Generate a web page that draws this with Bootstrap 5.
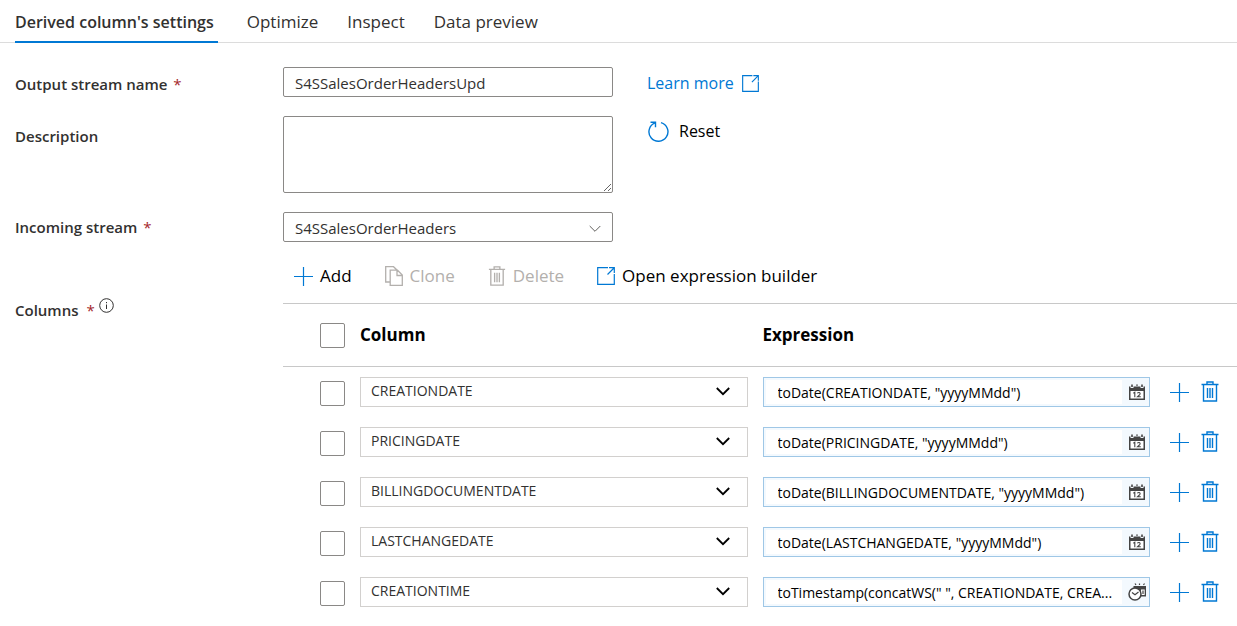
<!DOCTYPE html>
<html lang="en">
<head>
<meta charset="utf-8">
<meta name="viewport" content="width=device-width, initial-scale=1">
<title>Derived column's settings</title>
<link href="https://cdn.jsdelivr.net/npm/bootstrap@5.3.0/dist/css/bootstrap.min.css" rel="stylesheet">
<style>
  :root { --blue: #0078d4; --ink: #323130; --line: #c8c8c8; }
  body { font-family: "Open Sans", "Noto Sans", sans-serif; font-size: 15px; line-height: 20px; color: var(--ink); overflow-x: hidden; }
  svg { display: block; flex: none; fill: none; stroke: currentColor; }
  .settings-tabs { height: 43px; padding-left: 15px; gap: 29px; border-bottom: 1px solid #dcdcdc; }
  .settings-tabs .nav-link { padding: 10px 0 0; height: 43px; font-size: 17px; line-height: 24px; color: var(--ink); border-bottom: 2px solid transparent; white-space: nowrap; }
  .settings-tabs .nav-link.active { padding-right: 4px; font-size: 16px; font-weight: 600; border-color: var(--blue); }
  .settings-form { padding-left: 15px; padding-top: 24px; }
  .field { display: grid; grid-template-columns: 268px minmax(0, 330px) minmax(0, 1fr); margin-bottom: 19px; }
  .field-label { font-weight: 600; padding-top: 7px; }
  .description-label { padding-top: 10px; }
  .incoming-label { padding-top: 5px; }
  .required { color: #a4262c; font-weight: 400; margin-left: 2px; }
  .field-box { height: 30px; padding: 2px 11px 0; font-size: 15px; line-height: 20px; color: var(--ink); border: 1px solid #8a8886; border-radius: 2px; }
  textarea.field-box { height: 77px; display: block; }
  .stream-select { padding-right: 30px; background-image: url("data:image/svg+xml,%3Csvg xmlns='http://www.w3.org/2000/svg' viewBox='0 0 12 8' fill='none' stroke='%23605e5c'%3E%3Cpath d='M.7 1 6 6.300 11.300 1'/%3E%3C/svg%3E"); background-size: 12px 8px; background-position: right 11px top 12px; }
  .aside { padding-left: 34px; }
  .tool { display: inline-flex; align-items: center; gap: 7px; padding: 0; border: 0; background: none; font-size: 17px; line-height: 24px; color: #000; white-space: nowrap; }
  .tool svg, .learn-link { color: var(--blue); }
  .tool:disabled, .tool:disabled svg { color: #b3b0ad; }
  .learn-link { display: inline-flex; align-items: center; gap: 8px; font-size: 16px; line-height: 24px; text-decoration: none; padding-top: 4px; }
  .reset-tool { gap: 9px; font-size: 16px; padding-top: 3px; }
  .columns-field { display: grid; grid-template-columns: 268px minmax(0, 1fr); }
  .columns-label { padding-top: 33px; }
  .columns-label span { padding-top: 6px; }
  .toolbar { height: 42px; padding: 3px 0 0 10px; gap: 33px; }
  .columns-table { width: 100%; table-layout: fixed; border-top: 1px solid var(--line); }
  .columns-table th { height: 63px; padding: 0 15px 0 0; font-size: 17px; font-weight: 700; color: #000; }
  .columns-table thead { border-bottom: 1px solid var(--line); }
  .columns-table td { height: 50px; padding: 0 15px 0 0; vertical-align: middle; }
  .columns-table th:first-child { padding-left: 37px; }
  .columns-table td:first-child { padding: 3px 0 0 37px; }
  .columns-table td:last-child { padding: 0; }
  .check-col { width: 77px; }
  .action-col { width: 72px; }
  .columns-table .form-check-input { display: block; width: 25px; height: 25px; margin: 0; border: 1px solid #8a8886; border-radius: 2px; }
  .column-select { height: 30px; padding: 0 40px 2px 10px; font-size: 14px; line-height: 20px; color: var(--ink); border: 1px solid #d2d0ce; border-radius: 0; background-image: url("data:image/svg+xml,%3Csvg xmlns='http://www.w3.org/2000/svg' viewBox='0 0 14 9' fill='none' stroke='%23000' stroke-width='1.800'%3E%3Cpath d='M.8 1 7 7.200 13.200 1'/%3E%3C/svg%3E"); background-size: 14px 9px; background-position: right 17px center; }
  .expression { display: flex; align-items: center; height: 30px; padding: 0 3px 0 2px; border: 1px solid #9fc7e6; background: #f3f9fe; }
  .expression input { flex: 1; min-width: 0; height: 24px; padding: 2px 0 0 12px; border: 0; background: #fff; font-size: 14px; line-height: 20px; color: #000; text-overflow: ellipsis; }
  .expression svg { margin-left: 6px; color: #444; }
  .icon-btn { padding: 0; border: 0; background: none; color: var(--blue); }
</style>
</head>
<body>
<svg width="0" height="0" class="position-absolute" aria-hidden="true">
  <symbol id="plus" viewBox="0 0 20 20"><path d="M10.500 1v19M1 10.500h19" stroke-width="1.200"/></symbol>
  <symbol id="trash" viewBox="0 0 18 21"><path d="M.5 3.500h17M6 3.500V1h6v2.500M2.500 3.500v16.500h13V3.500M6.500 7v10M9 7v10M11.500 7v10" stroke-width="1.400"/></symbol>
  <symbol id="open" viewBox="0 0 18 18"><path d="M11 .7H.7v16.600h16.600V7M10.500 7.500 17 1M12 .7h5.300V6" stroke-width="1.200"/></symbol>
  <symbol id="copy" viewBox="0 0 18 20"><path d="M5 16H.7V.7h7.800L12 4M5.200 4.200h7.300l4.800 4.800v10.300H5.200zM12 4.500V9.500h5" stroke-width="1.300"/></symbol>
  <symbol id="reset" viewBox="0 0 21 21"><path d="M13 1.600A9.500 9.500 0 1 1 7 1.900M2.500 1.200h5v5" stroke-width="1.400"/></symbol>
  <symbol id="date" viewBox="0 0 18 18"><path d="M1 3.500h1.500v1.500h3V3.500h7v1.500h3V3.500H17V17H1z" fill="currentColor" stroke="none"/><path d="M2.500 8h13v7.500h-13z" fill="#fff" stroke="none"/><path d="M4 1.500v2.500M9 1.500v1.200M14 1.500v2.500" stroke-width="1.600"/><path d="M5.300 10.200 6.800 9.300V14.300M9.300 10.300Q10 9.300 11.200 9.500 12.700 10 11.700 11.600L9.500 13.800H12.800" stroke-width="1.100"/></symbol>
  <symbol id="time" viewBox="0 0 18 18"><path d="M5.500 3H18v10.500H5.500z" fill="currentColor" stroke="none"/><path d="M13 6.500h3.700v5.500H13z" fill="#fff" stroke="none"/><path d="M15 7.500v3.500M7 .5 8 2M11.500 .5v1.500M16.500 .5l-1 1.500" stroke-width="1.200"/><circle cx="7" cy="11" r="6" fill="#fff" stroke-width="1.500"/><path d="m4 9.500 3 2.300L10.500 9" stroke-width="1.200"/></symbol>
</svg>

<nav class="nav settings-tabs flex-nowrap">
  <a class="nav-link active" aria-current="page" href="#">Derived column's settings</a>
  <a class="nav-link" href="#">Optimize</a>
  <a class="nav-link" href="#">Inspect</a>
  <a class="nav-link" href="#">Data preview</a>
</nav>

<form class="settings-form">
  <div class="field">
    <label class="field-label" for="output">Output stream name <span class="required">*</span></label>
    <input id="output" class="form-control field-box" type="text" value="S4SSalesOrderHeadersUpd">
    <div class="aside"><a class="learn-link" href="#">Learn more <svg width="17" height="17"><use href="#open"/></svg></a></div>
  </div>
  <div class="field">
    <label class="field-label description-label" for="description">Description</label>
    <textarea id="description" class="form-control field-box"></textarea>
    <div class="aside"><button type="button" class="tool reset-tool"><svg width="23" height="21"><use href="#reset"/></svg>Reset</button></div>
  </div>
  <div class="field">
    <label class="field-label incoming-label" for="incoming">Incoming stream <span class="required">*</span></label>
    <select id="incoming" class="form-select field-box stream-select"><option>S4SSalesOrderHeaders</option></select>
  </div>

  <div class="columns-field">
    <div class="field-label columns-label d-flex align-items-start"><span>Columns</span><span class="required ms-2">*</span>
      <svg class="ms-1 mt-1" width="15" height="15" viewBox="0 0 15 15"><circle cx="7.500" cy="7.500" r="6.800"/><path d="M7.500 6.500v4.500M7.500 4v1.200"/></svg>
    </div>
    <div>
      <div class="toolbar d-flex align-items-start">
        <button type="button" class="tool"><svg width="20" height="20"><use href="#plus"/></svg>Add</button>
        <button type="button" class="tool" disabled><svg width="18" height="20"><use href="#copy"/></svg>Clone</button>
        <button type="button" class="tool" disabled><svg width="18" height="20"><use href="#trash"/></svg>Delete</button>
        <button type="button" class="tool"><svg width="18" height="18"><use href="#open"/></svg>Open expression builder</button>
      </div>
      <table class="columns-table">
        <colgroup><col class="check-col"><col><col><col class="action-col"></colgroup>
        <thead><tr>
          <th><input class="form-check-input" type="checkbox" aria-label="Select all columns"></th>
          <th scope="col">Column</th><th scope="col">Expression</th><th></th>
        </tr></thead>
        <tbody id="rows"></tbody>
      </table>
    </div>
  </div>
</form>

<script src="https://cdn.jsdelivr.net/npm/bootstrap@5.3.0/dist/js/bootstrap.bundle.min.js"></script>
<script>
  const columns = [
    ['CREATIONDATE', 'toDate(CREATIONDATE, "yyyyMMdd")', 'date'],
    ['PRICINGDATE', 'toDate(PRICINGDATE, "yyyyMMdd")', 'date'],
    ['BILLINGDOCUMENTDATE', 'toDate(BILLINGDOCUMENTDATE, "yyyyMMdd")', 'date'],
    ['LASTCHANGEDATE', 'toDate(LASTCHANGEDATE, "yyyyMMdd")', 'date'],
    ['CREATIONTIME', 'toTimestamp(concatWS(" ", CREATIONDATE, CREA...', 'time']
  ];
  document.getElementById('rows').innerHTML = columns.map(([name, expression, type]) => `
    <tr>
      <td><input class="form-check-input" type="checkbox" aria-label="Select ${name}"></td>
      <td><select class="form-select column-select" aria-label="Column"><option>${name}</option></select></td>
      <td><div class="expression"><input type="text" aria-label="Expression for ${name}" value="${expression.replace(/"/g, '&quot;')}"><svg width="18" height="18"><use href="#${type}"/></svg></div></td>
      <td><div class="d-flex align-items-center gap-2 ps-1">
        <button type="button" class="icon-btn" aria-label="Add after ${name}"><svg width="20" height="20"><use href="#plus"/></svg></button>
        <button type="button" class="icon-btn ms-1" aria-label="Delete ${name}"><svg width="18" height="21"><use href="#trash"/></svg></button>
      </div></td>
    </tr>`).join('');
</script>
</body>
</html>
